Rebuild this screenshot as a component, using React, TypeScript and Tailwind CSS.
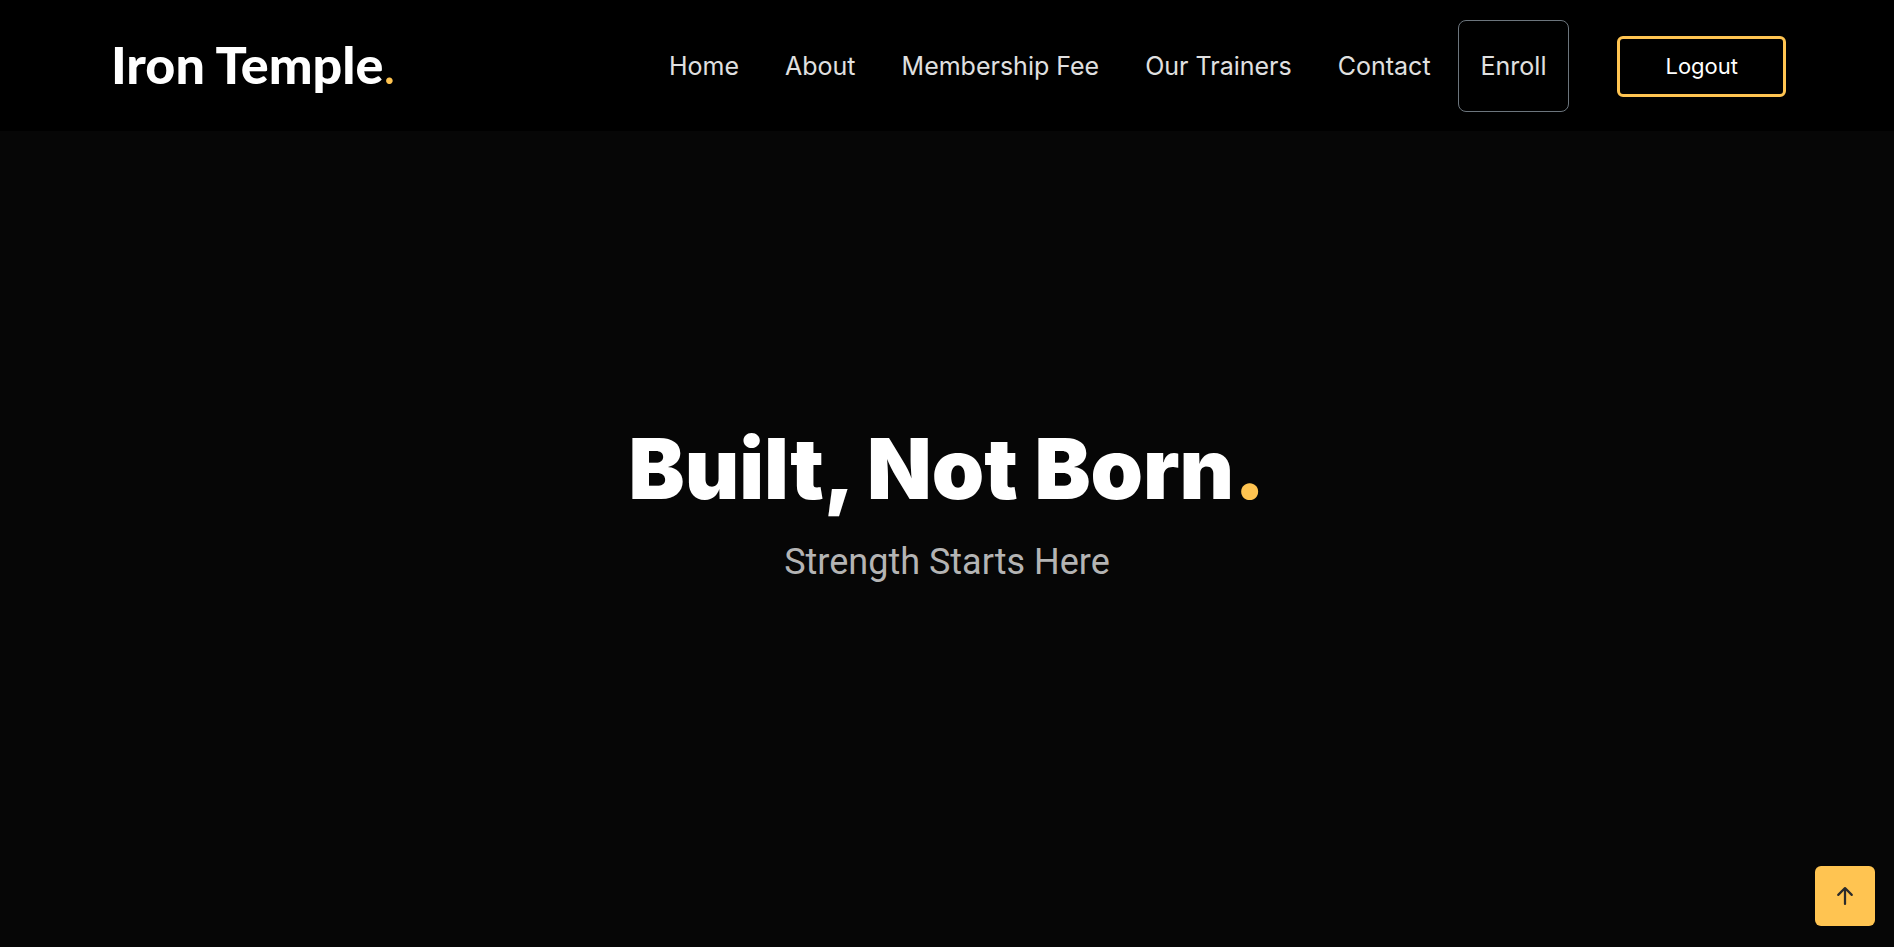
import { BsArrowUpShort } from "react-icons/bs";

const links = ["Home", "About", "Membership Fee", "Our Trainers", "Contact"];

export default function App() {
  return (
    <div className="flex min-h-screen flex-col border-b border-white bg-[#060606] font-['Inter',sans-serif] text-white">
      <header className="flex items-center justify-between bg-black px-[108px] pt-5 pb-[19px]">
        <a href="#home" className="px-[3px] pb-1 font-['Lato',sans-serif] text-[52px] leading-14 font-black">
          Iron Temple<span className="font-normal text-[#ffc451]">.</span>
        </a>
        <div className="flex items-center gap-12">
          <nav aria-label="Main" className="flex items-center text-[25px] leading-[34px] text-[#e0e0e0]">
            {links.map((label) => (
              <a key={label} href={`#${label.toLowerCase().replace(" ", "-")}`} className="px-[23px] py-7">
                {label}
              </a>
            ))}
            <a href="#enroll" className="ml-1 rounded-lg border border-[#6c757d] px-[22px] py-7">
              Enroll
            </a>
          </nav>
          <button type="button" className="rounded-md border-3 border-[#ffc451] px-[45px] py-3 text-[22px] leading-[31px]">
            Logout
          </button>
        </div>
      </header>
      <main className="flex flex-1 flex-col items-center justify-center gap-6 pb-[77px] text-center">
        <h1 className="text-[84px] leading-[98px] font-black">
          Built, Not Born<span className="text-[#ffc451]">.</span>
        </h1>
        <p className="font-['Roboto',sans-serif] text-4xl text-[#b4b4b4]">Strength Starts Here</p>
      </main>
      <a
        href="#home"
        aria-label="Back to top"
        className="fixed right-[19px] bottom-[22px] flex size-15 items-center justify-center rounded-md bg-[#ffc451] text-[#2b2b2b]"
      >
        <BsArrowUpShort className="size-9" />
      </a>
    </div>
  );
}
